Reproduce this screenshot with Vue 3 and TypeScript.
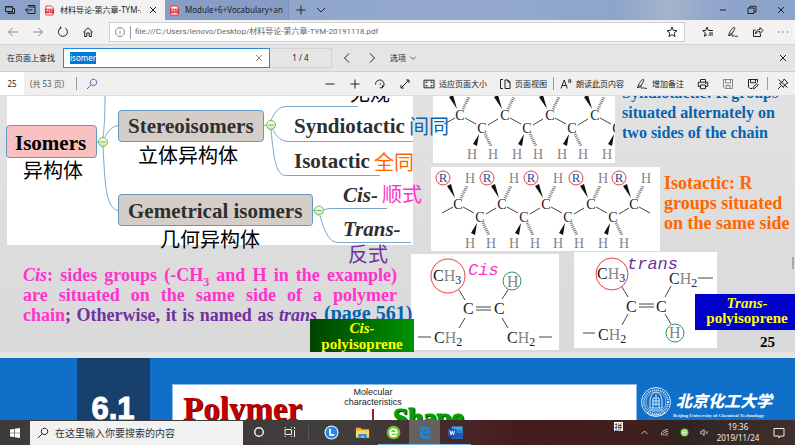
<script setup lang="ts">
import { ref } from 'vue'

const query = ref('isomer')
const page = ref('25')

const icons: Record<string, string> = {
  tabs: 'M1.5 2.5h7v5h-7zM4 7.5v2h6.5v-5H8.500M2 3h6M4 9h6',
  aside: 'M4 2.500V1.500h7v8H4V8M4.500 3h6.500M8.500 6H1.500M3.500 4L1.500 6l2 2',
  close: 'M3 3l6 6M9 3L3 9',
  plus: 'M6 1.500v9M1.500 6h9',
  minus: 'M1.500 6h9',
  down: 'M2 4l4 4 4-4',
  up: 'M2 8l4-4 4 4',
  left: 'M8 1.500L3.500 6 8 10.500',
  right: 'M4 1.500L8.500 6 4 10.500',
  back: 'M11 6H1.500M5.500 2l-4 4 4 4',
  forward: 'M1 6h9.500M6.500 2l4 4-4 4',
  reload: 'M4 1.800A4.500 4.500 0 1 0 8.200 2M3.600 .5L4 2.200 2.300 2.800',
  home: 'M1.500 6L6 1.800 10.500 6M2.700 5.200v5.300h2.100V7h2.400v3.500h2.100V5.200',
  info: 'M6 1.500a4.500 4.500 0 1 0 .01 0M6 5.300v3M6 3.500v.8',
  star: 'M6 1l1.400 3.400 3.600.3-2.800 2.300.9 3.600L6 8.700 2.900 10.600l.9-3.600L1 4.700l3.600-.3z',
  favs: 'M11 4.500H6.500L5 1 3.800 4.400.8 4.600l2.500 2.200-.9 3.500L5 8.500M7 7h4M6.500 9h4.500',
  pen: 'M1.500 10C2.500 6 5 2 7 1.500c1.500 0 .5 2-1 4.500C5 7.800 3 10 2 9.500M3 8.500c1-1.500 2.500-1 2 .5s1 1.500 1.800.8 1 .8 1.700.5 1 0 2.500.2',
  share: 'M3.500 4H1.500v6.500h7V8M3.500 8c0-3 2-4.500 4.500-4.500V1.500L11 4.500 8 7.500v-2c-2 0-3.500.7-4.500 2.500z',
  search: 'M7.500 1.200a3.200 3.200 0 1 0 .01 0M5.200 6.700L1 11',
  rotate: 'M1.500 6.500A4.300 4.300 0 1 1 8.500 9.600M5.800 9.800l2.700 0 0-2.600M5.500 6h1.500',
  expand: 'M2 10L10 2M7 2h3v3M2 7v3h3',
  fit: 'M1 2.200h10v7.600H1zM3 5.200V4h1.500M7.500 4H9v1.200M9 6.900V8H7.500M4.500 8H3V6.900',
  pages: 'M4 1.500H1.500v9H4M6 2h3l2 2v6.500H6zM9 2v2.200h2',
  print: 'M3.500 4V1.500h5V4M3.300 8.500H1.300V4.200h9.400v4.300H8.700M3.500 7h5v3.700h-5zM8.300 5.500h1',
  save: 'M1.500 1.500h9v9H3l-1.500-1.500zM3.500 1.500v3.500h5V1.500M4 10.500v-3h4v3',
  saveas: 'M10.500 4.500v-3h-9v7.500L3 10.500h2M3.500 1.700v3h5v-3M6 10.800l.5-2L10 5.500l1.300 1.300-3.500 3.500z',
  pin: 'M1 11l3-3M2.500 5.500l4 4 .8-2.300 2.500-1.900L11 5 7 1l-.4 1.200-1.900 2.500zM10.500 9.500l-9-8',
  more: 'M1 6h1M5.500 6h1M10 6h1',
  max: 'M2 4h6v5.500H2zM4 4V2.300h6V8H8',
}

interface Chain { x: number; y: number; w: number; h: number; units: number[]; cy: number; iso: boolean }
const chains: Chain[] = [
  { x: 433, y: 90, w: 182, h: 73, units: [460, 505, 550, 595], cy: 115, iso: false },
  { x: 431, y: 167, w: 229, h: 84, units: [458, 502, 546, 591, 634], cy: 204, iso: true },
]
</script>

<template>
  <div class="screen">
    <header class="tabbar">
      <button class="cell small" aria-label="Tabs set aside"><svg class="ico" viewBox="0 0 12 12"><path :d="icons.tabs" /></svg></button>
      <button class="cell small" aria-label="Set tabs aside"><svg class="ico" viewBox="0 0 12 12"><path :d="icons.aside" /></svg></button>
      <div class="tab active">
        <svg class="pdf" viewBox="0 0 10 12"><path d="M1 1h6l2 2v8H1z" fill="#fff" stroke="#d33" /><path d="M0 4h10v5H0z" fill="#e5252a" /><path d="M2 8V5h1v1.500H2M4.500 5v3h1V5zM7.500 8V5h1.500" fill="none" stroke="#fff" stroke-width=".6" /></svg>
        <span class="tab-title">材料导论-第六章-TYM-20191118.pdf</span>
        <button class="tab-close" aria-label="Close tab"><svg class="ico" viewBox="0 0 12 12"><path :d="icons.close" /></svg></button>
      </div>
      <div class="tab">
        <svg class="pdf" viewBox="0 0 10 12"><path d="M1 1h6l2 2v8H1z" fill="#fff" stroke="#d33" /><path d="M0 4h10v5H0z" fill="#e5252a" /><path d="M2 8V5h1v1.500H2M4.500 5v3h1V5zM7.500 8V5h1.500" fill="none" stroke="#fff" stroke-width=".6" /></svg>
        <span class="tab-title">Module+6+Vocabulary+and+terms</span>
      </div>
      <button class="cell small newtab" aria-label="New tab"><svg class="ico" viewBox="0 0 12 12"><path :d="icons.plus" /></svg></button>
      <button class="cell small" aria-label="Tab previews"><svg class="ico" viewBox="0 0 12 12"><path :d="icons.down" /></svg></button>
      <span class="grow"></span>
      <button class="cell wide" aria-label="Minimize"><svg class="ico" viewBox="0 0 12 12"><path d="M3 6h6" /></svg></button>
      <button class="cell wide" aria-label="Restore"><svg class="ico" viewBox="0 0 12 12"><path :d="icons.max" /></svg></button>
      <button class="cell wide" aria-label="Close"><svg class="ico" viewBox="0 0 12 12"><path :d="icons.close" /></svg></button>
    </header>

    <nav class="navbar">
      <button class="cell dim" aria-label="Back"><svg class="ico" viewBox="0 0 12 12"><path :d="icons.back" /></svg></button>
      <button class="cell dim" aria-label="Forward"><svg class="ico" viewBox="0 0 12 12"><path :d="icons.forward" /></svg></button>
      <button class="cell" aria-label="Refresh"><svg class="ico" viewBox="0 0 12 12"><path :d="icons.reload" /></svg></button>
      <button class="cell" aria-label="Home"><svg class="ico" viewBox="0 0 12 12"><path :d="icons.home" /></svg></button>
      <div class="address">
        <svg class="ico dim" viewBox="0 0 12 12"><path :d="icons.info" /></svg>
        <span class="bar"></span>
        <input class="url" aria-label="Address" value="file:///C:/Users/lenovo/Desktop/材料导论-第六章-TYM-20191118.pdf" />
        <button class="cell" aria-label="Add to favorites"><svg class="ico" viewBox="0 0 12 12"><path :d="icons.star" /></svg></button>
      </div>
      <button class="cell" aria-label="Favorites"><svg class="ico" viewBox="0 0 12 12"><path :d="icons.favs" /></svg></button>
      <button class="cell" aria-label="Notes"><svg class="ico" viewBox="0 0 12 12"><path :d="icons.pen" /></svg></button>
      <button class="cell" aria-label="Share"><svg class="ico" viewBox="0 0 12 12"><path :d="icons.share" /></svg></button>
      <button class="cell" aria-label="More"><svg class="ico" viewBox="0 0 12 12"><path :d="icons.more" /></svg></button>
    </nav>

    <section class="findbar">
      <label for="find">在页面上查找</label>
      <div class="findbox">
        <span class="marked"><input id="find" v-model="query" size="6" /></span>
        <span class="grow"></span>
        <button class="cell small" aria-label="Clear"><svg class="ico dim" viewBox="0 0 12 12"><path :d="icons.close" /></svg></button>
      </div>
      <span class="count">1 / 4</span>
      <button class="cell first" aria-label="Previous"><svg class="ico" viewBox="0 0 12 12"><path :d="icons.left" /></svg></button>
      <button class="cell" aria-label="Next"><svg class="ico" viewBox="0 0 12 12"><path :d="icons.right" /></svg></button>
      <button class="options">选项<svg class="ico tiny" viewBox="0 0 12 12"><path :d="icons.down" /></svg></button>
      <span class="grow"></span>
      <button class="cell" aria-label="Close find bar"><svg class="ico" viewBox="0 0 12 12"><path :d="icons.close" /></svg></button>
    </section>

    <section class="pdfbar">
      <input class="page" v-model="page" aria-label="Page" />
      <span class="total">(共 53 页)</span>
      <span class="bar"></span>
      <button class="cell blue" aria-label="Search"><svg class="ico" viewBox="0 0 12 12"><path :d="icons.search" /></svg></button>
      <span class="grow"></span>
      <button class="cell" aria-label="Zoom out"><svg class="ico" viewBox="0 0 12 12"><path :d="icons.minus" /></svg></button>
      <button class="cell" aria-label="Zoom in"><svg class="ico" viewBox="0 0 12 12"><path :d="icons.plus" /></svg></button>
      <button class="cell" aria-label="Rotate"><svg class="ico" viewBox="0 0 12 12"><path :d="icons.rotate" /></svg></button>
      <button class="cell" aria-label="Full screen"><svg class="ico" viewBox="0 0 12 12"><path :d="icons.expand" /></svg></button>
      <button class="tool"><svg class="ico" viewBox="0 0 12 12"><path :d="icons.fit" /></svg>适应页面大小</button>
      <button class="tool"><svg class="ico" viewBox="0 0 12 12"><path :d="icons.pages" /></svg>页面视图</button>
      <span class="bar"></span>
      <button class="tool"><svg class="ico" viewBox="0 0 12 12"><path d="M1 10.500L4.200 2l3.200 8.500M2.200 7.500h4M8.500 1.500q1.200 1.500 0 3M10 .8q1.800 2.200 0 4.400" /></svg>朗读此页内容</button>
      <button class="tool"><svg class="ico" viewBox="0 0 12 12"><path :d="icons.pen" /></svg>增加备注</button>
      <button class="cell" aria-label="Print"><svg class="ico" viewBox="0 0 12 12"><path :d="icons.print" /></svg></button>
      <button class="cell dim" aria-label="Save"><svg class="ico" viewBox="0 0 12 12"><path :d="icons.save" /></svg></button>
      <button class="cell" aria-label="Save as"><svg class="ico" viewBox="0 0 12 12"><path :d="icons.saveas" /></svg></button>
      <span class="bar spaced"></span>
      <button class="cell" aria-label="Pin toolbar"><svg class="ico" viewBox="0 0 12 12"><path :d="icons.pin" /></svg></button>
    </section>

    <main class="viewer">
      <svg class="slide" viewBox="0 96 795 256">
        <defs>
          <linearGradient id="paper" x1="0" y1="0" x2="0" y2="1"><stop offset="0" stop-color="#e2e2e2" /><stop offset="1" stop-color="#d9d9d9" /></linearGradient>
          <linearGradient id="green"><stop offset="0" stop-color="#004400" /><stop offset="1" stop-color="#009200" /></linearGradient>
          <linearGradient id="knob" x1="0" y1="0" x2="0" y2="1"><stop offset="0" stop-color="#fff" /><stop offset="1" stop-color="#c9e8b4" /></linearGradient>
        </defs>
        <rect y="96" width="795" height="256" fill="url(#paper)" />
        <rect x="7" y="96" width="406" height="149" fill="#fff" />

        <g class="wire">
          <path d="M105 96C105 118 104 130 103 137M105 137Q111 126 118 125.500M103 147C105 180 105 208 118 210.500" />
          <path d="M264 125.500h3M313 210.500h2M97 142h2" />
          <path d="M271 120Q277 106.500 285 106.500H358M273 130Q279 141.500 288 141.500H413M271 130C274 160 276 175.500 286 175.500H380" />
          <path d="M324 209.500L330 208.500H387M320 216Q327 242.500 337 242.500H411" />
        </g>
        <g class="node">
          <rect x="6.500" y="125.500" width="90" height="32" rx="3" fill="#f8c0c0" />
          <rect x="118.500" y="110.500" width="145" height="31" rx="3" fill="#d5cdc7" />
          <rect x="118.500" y="194.500" width="194" height="31" rx="3" fill="#d5cdc7" />
        </g>
        <g class="knob">
          <circle cx="103" cy="142" r="4.500" /><circle cx="271" cy="125" r="4.500" /><circle cx="319" cy="210.500" r="4.500" />
          <path d="M100.500 142h5M268.500 125h5M316.500 210.500h5" />
        </g>

        <g class="term">
          <text x="15" y="150" class="black">Isomers</text>
          <text x="128" y="133">Stereoisomers</text>
          <text x="128" y="218">Gemetrical isomers</text>
          <text x="294" y="133">Syndiotactic</text>
          <text x="294" y="168">Isotactic</text>
          <text x="343" y="202" class="it">Cis-</text>
          <text x="343" y="236" class="it">Trans-</text>
        </g>
        <g class="han">
          <text x="23" y="178">异构体</text>
          <text x="138" y="163">立体异构体</text>
          <text x="160" y="247">几何异构体</text>
          <text x="350" y="101">无规</text>
          <text x="374" y="170" fill="#ff6600">全同</text>
          <text x="382" y="202" fill="#ff33cc">顺式</text>
          <text x="348" y="262" fill="#7030a0">反式</text>
        </g>

        <svg v-for="c in chains" :key="c.cy" :x="c.x" :y="c.y" :width="c.w" :height="c.h" :viewBox="`${c.x} ${c.y} ${c.w} ${c.h}`">
          <rect :x="c.x" :y="c.y" :width="c.w" :height="c.h" fill="#fff" />
          <path class="bond" :d="`M${c.units[0] - 16} ${c.cy + 9}l11 -6`" />
          <g v-for="(u, i) in c.units" :key="u">
            <path class="bond" :d="`M${u + 5} ${c.cy + 3}l11 6`" />
            <path class="wedge" :d="`M${u - 3} ${c.cy - 6}L${u - 11} ${c.cy - 18}l4 -2z`" />
            <path class="hatch" :d="`M${u + 3} ${c.cy - 6}L${u + 9} ${c.cy - 18}`" />
            <text :x="u" :y="c.cy + 5" class="atom">C</text>
            <g v-if="c.iso">
              <circle :cx="u - 15" :cy="c.cy - 26" r="7" class="ring" />
              <text :x="u - 15" :y="c.cy - 22" class="atom r">R</text>
              <text :x="u + 12" :y="c.cy - 21" class="atom h">H</text>
            </g>
            <text v-if="!c.iso && i === c.units.length - 1" :x="u + 22" :y="c.cy + 18" class="atom">C</text>
            <g v-if="!c.iso || i < c.units.length - 1">
              <path class="bond" :d="`M${u + 28} ${c.cy + 10}l10 -6`" />
              <path class="wedge" :d="`M${u + 19} ${c.cy + 19}L${u + 13} ${c.cy + 29}l4 2z`" />
              <path class="hatch" :d="`M${u + 25} ${c.cy + 19}L${u + 31} ${c.cy + 31}`" />
              <text v-if="c.iso || i < c.units.length - 1" :x="u + 22" :y="c.cy + 18" class="atom">C</text>
              <text :x="u + 12" :y="c.cy + 44" class="atom h">H</text>
              <text v-if="c.iso || i < c.units.length - 1" :x="u + 33" :y="c.cy + 44" class="atom h">H</text>
            </g>
          </g>
        </svg>
        <text x="409" y="134" class="han" fill="#0563b0">间同</text>

        <g class="mol">
          <rect x="411" y="254" width="148" height="96" fill="#fff" />
          <path class="bond" d="M459 290l6 10M465 318l-6 10M508 290l-6 9M502 318l6 10M476 307h15M476 310h15M418 337h13M539 337h13" />
          <text x="433" y="281">C<tspan class="h">H</tspan><tspan class="sub" dy="3">3</tspan></text>
          <text x="463" y="314">C</text><text x="494" y="314">C</text>
          <text x="507" y="287" class="h">H</text>
          <text x="434" y="343">C<tspan class="h">H</tspan><tspan class="sub" dy="3">2</tspan></text>
          <text x="507" y="343">C<tspan class="h">H</tspan><tspan class="sub" dy="3">2</tspan></text>
          <circle cx="448" cy="276" r="17" class="ring" /><circle cx="512" cy="281" r="9" class="ring ok" />
          <text x="468" y="275" class="mono" fill="#ff33cc">Cis</text>

          <rect x="574" y="252" width="143" height="96" fill="#fff" />
          <path class="bond" d="M622 287l6 10M628 314l-6 11M671 286l-6 11M665 314l6 10M639 304h15M639 307h15M583 333h12M698 278h15" />
          <text x="597" y="279">C<tspan class="h">H</tspan><tspan class="sub" dy="3">3</tspan></text>
          <text x="626" y="312">C</text><text x="656" y="312">C</text>
          <text x="669" y="338" class="h">H</text>
          <text x="598" y="340">C<tspan class="h">H</tspan><tspan class="sub" dy="3">2</tspan></text>
          <text x="669" y="284">C<tspan class="h">H</tspan><tspan class="sub" dy="3">2</tspan></text>
          <circle cx="612" cy="274" r="16" class="ring" /><circle cx="675" cy="333" r="9" class="ring ok" />
          <text x="627" y="269" class="mono" fill="#7030a0">trans</text>
        </g>

        <foreignObject x="622" y="83" width="173" height="64"><p class="note syn">Syndiotactic: R groups<br />situated alternately on<br />two sides of the chain</p></foreignObject>
        <foreignObject x="664" y="173" width="131" height="64"><p class="note iso">Isotactic: R<br />groups situated<br />on the same side</p></foreignObject>
        <foreignObject x="23" y="265" width="374" height="64">
          <div class="para">
            <p class="full"><i>Cis</i>: sides groups (-CH<sub>3</sub> and H in the example)</p>
            <p class="full">are situated on the same side of a polymer</p>
            <p class="full last">chain<span class="violet">; Otherwise, it is named as <i>trans</i></span></p>
          </div>
        </foreignObject>
        <text x="324" y="320" class="ref">(page 561)</text>
        <rect x="310" y="319" width="104" height="33" fill="url(#green)" />
        <rect x="695" y="294" width="100" height="36" fill="#0000cc" />
        <g class="label">
          <text x="362" y="333" class="it">Cis-</text><text x="362" y="349">polyisoprene</text>
          <text x="747" y="308" class="it">Trans-</text><text x="747" y="323">polyisoprene</text>
        </g>
        <text x="760" y="347" class="pageno">25</text>
        <path d="M793 257v12" stroke="#777" />
      </svg>

      <svg class="slide next" viewBox="0 358 795 62">
        <rect y="358" width="795" height="62" fill="#106fc8" />
        <rect x="77" y="358" width="73" height="62" fill="#17406d" />
        <text x="113" y="419" class="chapter">6.1</text>
        <rect x="172.500" y="384.500" width="464" height="40" fill="#fff" stroke="#8bbbe8" />
        <text x="184" y="421" class="poly shade">Polymer</text>
        <text x="183" y="420" class="poly">Polymer</text>
        <text x="373" y="395" class="cap">Molecular</text>
        <text x="373" y="405" class="cap">characteristics</text>
        <path d="M373 409v12" stroke="#a8182c" stroke-width="2" />
        <text x="394" y="428" class="shape shade">Shape</text>
        <text x="393" y="427" class="shape">Shape</text>
        <g fill="none" stroke="#d6e8fa">
          <circle cx="656" cy="402" r="14.500" /><circle cx="656" cy="402" r="12" stroke-dasharray="1 1" stroke-width="2" /><circle cx="656" cy="402" r="10" stroke-width=".6" />
          <path d="M650 408v-8q1-7 6-8 5 1 6 8v8zM649 410h14M653 408v-10h6v10M656 394v12M652 401h8M652 404h8" />
          <path d="M647 412l3 3h12l3-3" />
        </g>
        <text x="676" y="407" class="uni">北京化工大学</text>
        <text x="673" y="417" class="uni-en">Beijing University of Chemical Technology</text>
      </svg>
    </main>

    <footer class="taskbar">
      <button class="start" aria-label="Start"><svg class="ico" viewBox="0 0 12 12"><path d="M1 2.500l4-.6v3.800H1zM5.600 1.800L11 1v4.700H5.600zM1 6.300h4v3.800l-4-.6zM5.600 6.300H11V11l-5.400-.8z" fill="#fff" stroke="none" /></svg></button>
      <label class="tasksearch"><svg class="ico" viewBox="0 0 12 12"><path :d="icons.search" /></svg><input placeholder="在这里输入你要搜索的内容" aria-label="搜索" /></label>
      <button class="task" aria-label="Cortana"><svg class="ico" viewBox="0 0 12 12"><circle cx="6" cy="6" r="4.300" stroke-width="1.500" /></svg></button>
      <button class="task" aria-label="Task view"><svg class="ico" viewBox="0 0 12 12"><path d="M1 3.500h6.500v5H1zM1 1v1M7.500 1v1M1 10v1M7.500 10v1M10.500 1v2M10.500 4v7" /></svg></button>
      <span class="split"></span>
      <button class="task" aria-label="Browser L"><svg class="app" viewBox="0 0 16 16"><circle cx="8" cy="8" r="7.500" fill="#e8f4ff" /><circle cx="8" cy="8" r="6.300" fill="#2c86e8" /><path d="M6.500 4v6.500H11" fill="none" stroke="#fff" stroke-width="1.800" /></svg></button>
      <button class="task" aria-label="Explorer"><svg class="app" viewBox="0 0 16 16"><path d="M1 3h5l1 1.500h8V13H1z" fill="#eeb02f" /><path d="M1 6h14v7.500H1z" fill="#fbd669" /><path d="M3.500 14V9.500h9V14h-3v-2h-3v2z" fill="#3b8ede" /></svg></button>
      <button class="task open" aria-label="Green browser"><svg class="app" viewBox="0 0 16 16"><circle cx="8" cy="8" r="7.300" fill="#6cc531" /><path d="M4.500 8.300h7C11.500 5.500 10 4.300 8 4.300S4.300 5.900 4.300 8.200 6 12 8 12q2 0 3.300-1.500" fill="none" stroke="#fff" stroke-width="1.900" /></svg></button>
      <button class="task open active" aria-label="Edge"><svg class="app" viewBox="0 0 16 16"><path d="M1.500 7.500C2 3.500 5 1.200 8.300 1.200c4 0 6.500 2.900 6.300 7.600H5.800c.2 2.300 2 3.300 4.200 3.300 1.500 0 3-.4 4-1.100v3c-1.400.7-3 1-4.500 1C5.500 15 3 12.800 3 9.500c0-2.200 1.200-4 3-5C4 4.700 2.300 6 1.500 7.500zM5.900 6.800h4.900C10.700 5.200 9.900 4.300 8.500 4.300S6.200 5.200 5.900 6.800z" fill="#1489e0" /></svg></button>
      <button class="task open" aria-label="Word"><svg class="app" viewBox="0 0 16 16"><path d="M4 1.500h11.500v13H4z" fill="#41a5ee" /><path d="M4 5h11.500v3.500H4z" fill="#2b7cd3" /><path d="M4 8.500h11.500v6H4z" fill="#185abd" /><path d="M0 4h9v8.500H0z" fill="#1b57b3" /><path d="M2 6l1.200 4.500L4.500 6.500l1.300 4L7 6" fill="none" stroke="#fff" /></svg></button>
      <span class="grow"></span>
      <span class="ime">拼</span>
      <button class="tray" aria-label="Hidden icons"><svg class="ico" viewBox="0 0 12 12"><path :d="icons.up" /></svg></button>
      <button class="tray" aria-label="Network"><svg class="ico" viewBox="0 0 12 12"><path d="M1.500 9.500Q2 2.500 10.500 2M4 10Q4 5 10.500 4.500M6.500 10.300Q6.500 7.500 10.500 7M9 10.500q0-1 1.500-1" /></svg></button>
      <button class="tray" aria-label="Security"><svg class="ico" viewBox="0 0 16 16"><circle cx="8" cy="8" r="7" fill="#7bd33b" stroke="none" /><path d="M4.500 8.300h7C11.500 5.500 10 4.300 8 4.300S4.300 5.900 4.300 8.200 6 12 8 12q2 0 3.300-1.500" stroke="#fff" stroke-width="1.600" /></svg></button>
      <button class="tray" aria-label="Volume muted"><svg class="ico" viewBox="0 0 12 12"><path d="M1 4.500h1.500L5.500 2v8L2.500 7.500H1zM7.500 4.500l3 3M10.500 4.500l-3 3" /></svg></button>
      <div class="clock"><span>19:36</span><span>2019/11/24</span></div>
      <button class="notif" aria-label="Notifications"><svg class="ico" viewBox="0 0 12 12"><path d="M1 1.500h10v7.500H7.500l-1.500 2V9H1z" /></svg></button>
    </footer>
  </div>
</template>

<style>
body { margin: 0; }
</style>

<style scoped>
.screen {
  display: flex;
  flex-direction: column;
  height: 100vh;
  overflow: hidden;
  font: 8px/12px "Noto Sans", "Noto Sans CJK SC", sans-serif;
  color: #222;
}
button, input { font: inherit; color: inherit; border: 0; padding: 0; margin: 0; background: none; min-width: 0; outline: none; }
button { display: flex; align-items: center; justify-content: center; white-space: nowrap; }
.grow { flex: 1; }
.ico { width: 12px; height: 12px; flex: none; fill: none; stroke: currentColor; stroke-width: 1; }
.tiny { width: 8px; height: 8px; }
.cell { width: 25px; height: 20px; flex: none; }
.small { width: 20px; }
.wide { width: 29px; }
.dim { color: #888; }
.bar { width: 1px; height: 13px; background: #999; flex: none; }
.spaced { margin: 0 2px; }

.tabbar { display: flex; flex: none; height: 20px; background: linear-gradient(90deg, #8da2c9, #93a8cc 60%, #8ea5cb 78%, #a3b4ca 84%, #8fa5ca 90%, #8ba2ca); }
.tab { display: flex; align-items: center; gap: 6px; width: 124px; height: 20px; padding: 0 5px; box-sizing: border-box; border-right: 1px solid #7d92b8; background: #879dc6; }
.tab.active { width: 125px; background: #f2f2f2; border-color: #f2f2f2; }
.pdf { width: 9px; height: 11px; flex: none; }
.tab-title { flex: 1; overflow: hidden; white-space: nowrap; }
.tab-close { width: 12px; }
.newtab { margin-left: 2px; }

.navbar { display: flex; flex: none; align-items: center; height: 24px; background: #f2f2f2; border-bottom: 1px solid #d4d4d4; }
.address { display: flex; align-items: center; gap: 4px; flex: 1; height: 18px; margin: 0 10px 0 9px; padding-left: 4px; border: 1px solid #cfcfcf; background: #fff; }
.url { flex: 1; color: #666; font-family: Roboto, "Noto Sans CJK SC", sans-serif; }

.findbar { display: flex; flex: none; align-items: center; height: 26px; padding-left: 7px; background: #e5e5e5; border-bottom: 1px solid #cfcfcf; }
.findbar label { width: 56px; flex: none; }
.findbox { display: flex; align-items: center; width: 207px; height: 20px; box-sizing: border-box; padding-left: 6px; border: 1px solid #2b88d9; background: #fff; }
.marked { display: flex; background: #0078d7; color: #fff; height: 12px; }
.marked input { width: 26px; height: 12px; }
.count { width: 62px; height: 20px; line-height: 18px; box-sizing: border-box; border: 1px solid #d2d2d2; border-left: 0; text-align: center; }
.first { margin-left: 2px; }
.options { gap: 3px; margin-left: 6px; }

.pdfbar { display: flex; flex: none; align-items: center; height: 24px; background: #f0f0f0; border-bottom: 1px solid #ddd; box-sizing: border-box; }
.page { width: 24px; align-self: stretch; background: #fff; text-align: center; }
.total { width: 46px; padding-left: 6px; color: #555; }
.blue { color: #2f6fc0; margin-left: 2px; }
.tool { gap: 4px; height: 20px; padding: 0 6px; }

.viewer { flex: 1; min-height: 0; overflow: hidden; background: #e5e5e5; }
.slide { display: block; width: 100%; height: auto; }
.next { margin-top: 6px; }
.wire { fill: none; stroke: #7aa8c8; }
.node rect { stroke: #5f98c0; }
.knob { fill: url(#knob); stroke: #72b352; }
.term { font: bold 21px "Liberation Serif", serif; fill: #2f2f2f; }
.black { fill: #000; }
.it { font-style: italic; }
.han { font: 400 20px "Noto Sans CJK SC", sans-serif; }
.bond { stroke: #444; fill: none; }
.wedge { fill: #111; }
.hatch { stroke: #777; stroke-width: 3; stroke-dasharray: 1 1; }
.atom { font: 14px "Liberation Serif", serif; text-anchor: middle; fill: #222; }
.h, .atom.h { fill: #858585; }
.atom.r { fill: #1b50a8; font-size: 13px; }
.ring { fill: none; stroke: #ee3b45; }
.ok { stroke: #2f8f72; }
.mol { font: 16px "Liberation Serif", serif; fill: #222; }
.sub { font-size: 12px; }
.mono { font: italic 17px "Liberation Mono", monospace; }
p { margin: 0; }
.note { font: bold 18px/20px "Liberation Serif", serif; white-space: nowrap; }
.syn { font-size: 16px; color: #0563b0; }
.iso { color: #ff6600; }
.para { font: bold 18px/20px "Liberation Serif", serif; color: #ff33cc; }
.para sub { font-size: 12px; line-height: 0; }
.full { text-align-last: justify; }
.last { width: 294px; }
.violet { color: #7030a0; }
.ref { font: bold 20px "Liberation Serif", serif; fill: #0563b0; }
.label { font: bold 15px "Liberation Serif", serif; fill: #ff0; text-anchor: middle; }
.pageno { font: bold 15px "Liberation Serif", serif; }
.chapter { font: bold 31px "Liberation Sans", sans-serif; fill: #fff; stroke: #fff; text-anchor: middle; }
.poly { font: bold 33px "Liberation Serif", serif; fill: #c00000; }
.shape { font: bold 27px "Liberation Serif", serif; fill: #00a000; stroke: #00a000; }
.poly.shade { fill: #600; }
.shape.shade { fill: #040; stroke: #040; }
.cap { font: 9px "Liberation Sans", sans-serif; fill: #222; text-anchor: middle; }
.uni { font: italic 900 16px "Noto Sans CJK SC", sans-serif; fill: #fff; }
.uni-en { font: bold 5px "Liberation Serif", serif; fill: #e4f0fc; }

.taskbar { display: flex; flex: none; align-items: center; height: 25px; color: #eee; background: linear-gradient(90deg, #3d3c3b, #403d3b 45%, #48282a 57%, #471b1e 65%, #40201f 80%, #302422 86%, #40302c); }
.taskbar .app { width: 15px; height: 15px; }
.start { width: 30px; height: 25px; }
.tasksearch { display: flex; align-items: center; gap: 6px; width: 213px; height: 24px; padding-left: 7px; box-sizing: border-box; background: #f2f2f2; color: #222; }
.tasksearch input { flex: 1; font-size: 10px; }
.tasksearch input::placeholder { color: #333; opacity: 1; }
.task { width: 31px; height: 25px; box-sizing: border-box; border-bottom: 1px solid transparent; }
.split { width: 1px; height: 15px; margin: 0 7px 0 3px; background: #5a5654; }
.open { border-color: #76b9ed; }
.task.active { background: #66605f; }
.ime { align-self: flex-start; margin: 2px 11px 0 0; width: 9px; height: 9px; line-height: 9px; background: #fff; color: #000; text-align: center; }
.tray { width: 20px; height: 25px; }
.tray .ico { width: 9px; height: 9px; }
.clock { display: flex; flex-direction: column; width: 48px; padding-bottom: 2px; line-height: 11px; text-align: center; }
.notif { width: 33px; }
</style>
